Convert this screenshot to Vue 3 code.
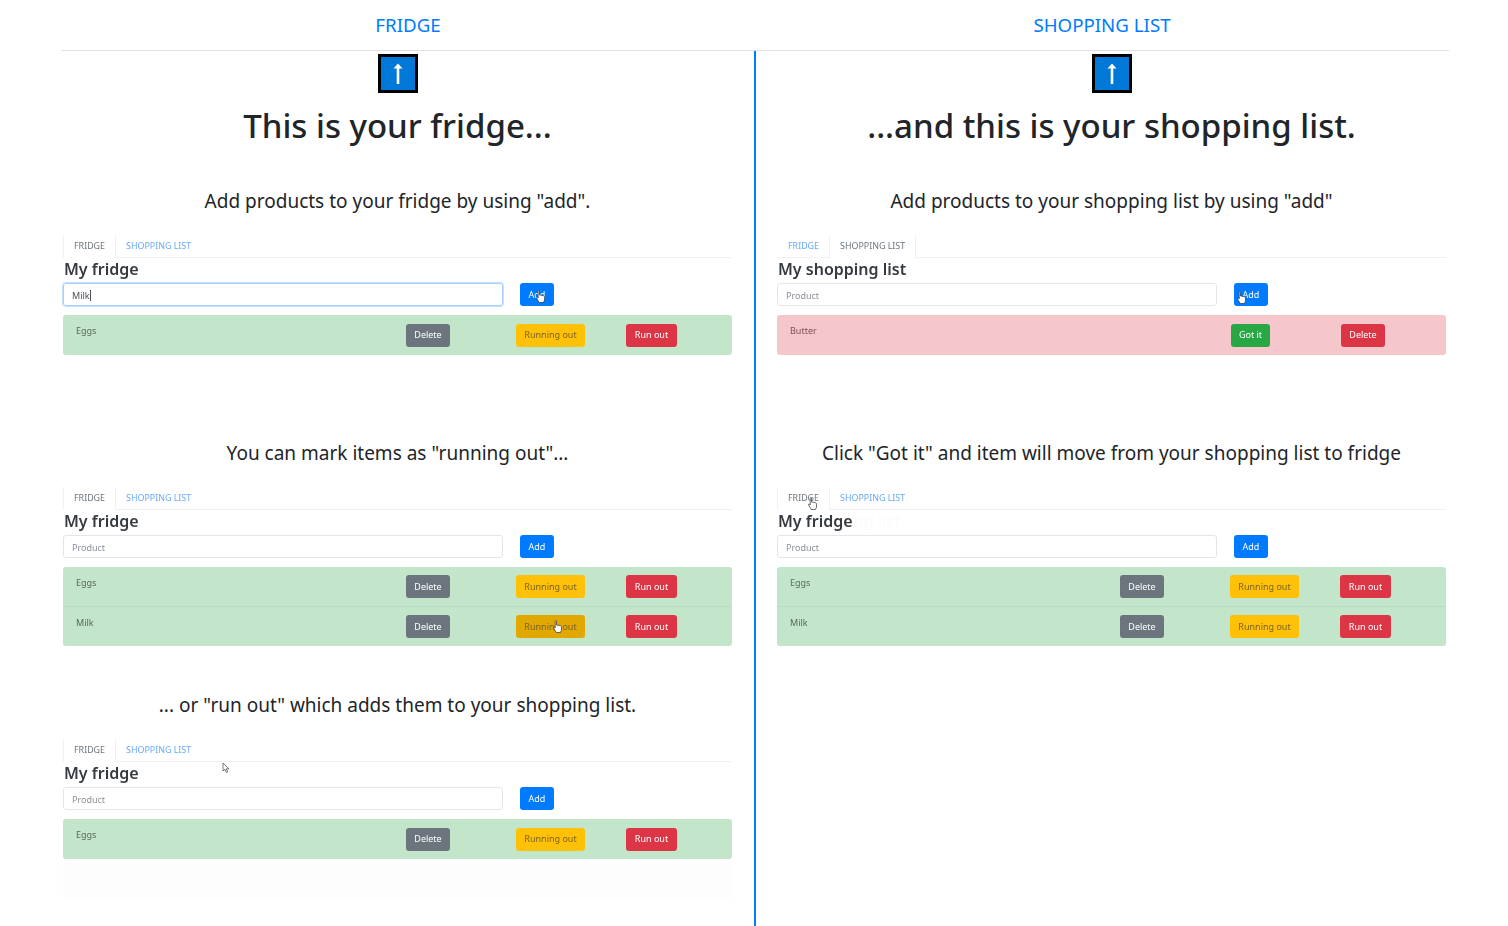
<script setup>
const del = { label: 'Delete', kind: 'grey' }
const low = { label: 'Running out', kind: 'yellow' }
const out = { label: 'Run out', kind: 'red' }
const gotIt = { label: 'Got it', kind: 'green' }

const fridgeActions = [del, low, out]
const shopActions = [gotIt, del]

const columns = [
  {
    nav: 'FRIDGE',
    title: 'This is your fridge...',
    cls: 'col-left',
    sections: [
      {
        text: 'Add products to your fridge by using "add".',
        tab: 'fridge', value: 'Milk', focus: true,
        items: [{ name: 'Eggs', actions: fridgeActions }],
        cursor: { type: 'hand', x: 473, y: 55 }
      },
      {
        text: 'You can mark items as "running out"...',
        tab: 'fridge',
        items: [
          { name: 'Eggs', actions: fridgeActions },
          { name: 'Milk', actions: fridgeActions, pressed: true }
        ],
        cursor: { type: 'hand', x: 490, y: 133 }
      },
      {
        text: '... or "run out" which adds them to your shopping list.',
        tab: 'fridge',
        items: [{ name: 'Eggs', actions: fridgeActions }],
        cursor: { type: 'arrow', x: 159, y: 23 },
        fade: true
      }
    ]
  },
  {
    nav: 'SHOPPING LIST',
    title: '...and this is your shopping list.',
    cls: 'col-right',
    sections: [
      {
        text: 'Add products to your shopping list by using "add"',
        tab: 'shopping',
        items: [{ name: 'Butter', actions: shopActions, red: true }],
        cursor: { type: 'hand', x: 460, y: 56 }
      },
      {
        text: 'Click "Got it" and item will move from your shopping list to fridge',
        tab: 'fridge',
        ghost: true,
        items: [
          { name: 'Eggs', actions: fridgeActions },
          { name: 'Milk', actions: fridgeActions }
        ],
        cursor: { type: 'hand', x: 31, y: 10 }
      }
    ]
  }
]
</script>

<template>
  <div class="page">
    <nav class="top-nav">
      <a v-for="col in columns" :key="col.nav" class="top-link">{{ col.nav }}</a>
    </nav>
    <main class="columns">
      <section v-for="col in columns" :key="col.title" class="col" :class="col.cls">
        <div class="up-btn">
          <svg width="12" height="24" viewBox="0 0 12 24">
            <path d="M6 1.500 L1.500 6.500 H4.700 V22 H7.300 V6.500 H10.500 Z" fill="#fff" />
          </svg>
        </div>
        <h1>{{ col.title }}</h1>
        <div class="steps">
          <article v-for="step in col.sections" :key="step.text" class="step">
            <p class="step-text">{{ step.text }}</p>
            <div class="mock">
              <div class="tabs">
                <span class="tab" :class="{ active: step.tab === 'fridge' }">FRIDGE</span>
                <span class="tab" :class="{ active: step.tab === 'shopping' }">SHOPPING LIST</span>
              </div>
              <h2>{{ step.tab === 'fridge' ? 'My fridge' : 'My shopping list' }}<span v-if="step.ghost" class="ghost">ng list</span></h2>
              <div class="add-form">
                <div class="input" :class="{ focus: step.focus }">
                  <template v-if="step.value">{{ step.value }}<i class="caret"></i></template>
                  <span v-else class="placeholder">Product</span>
                </div>
                <button class="btn blue">Add</button>
              </div>
              <ul class="list">
                <li v-for="item in step.items" :key="item.name" class="row" :class="{ red: item.red }">
                  <span class="name">{{ item.name }}</span>
                  <button
                    v-for="a in item.actions"
                    :key="a.label"
                    class="btn"
                    :class="[a.kind, { pressed: item.pressed && a.kind === 'yellow' }]"
                  >{{ a.label }}</button>
                </li>
              </ul>
              <svg
                v-if="step.cursor.type === 'hand'"
                class="cursor"
                :style="{ left: step.cursor.x + 'px', top: step.cursor.y + 'px' }"
                width="9" height="13" viewBox="0 0 9 13"
              >
                <path d="M2.200 1.200c0-.8 1.300-.8 1.300 0V5l3.600.6c1 .2 1.400.7 1.400 1.500V10l-1 2.500H3.200L.6 8c-.4-.8.5-1.400 1.100-.7l.5.7z" fill="#fff" stroke="#333" stroke-width=".7" />
              </svg>
              <svg
                v-else
                class="cursor"
                :style="{ left: step.cursor.x + 'px', top: step.cursor.y + 'px' }"
                width="8" height="12" viewBox="0 0 8 12"
              >
                <path d="M1 1v8l2-1.800L4.400 10.500l1.300-.6L4.400 6.800H7z" fill="#fff" stroke="#555" stroke-width=".8" />
              </svg>
              <div v-if="step.fade" class="fade"></div>
            </div>
          </article>
        </div>
      </section>
    </main>
  </div>
</template>

<style scoped>
.page {
  height: 926px;
  padding: 0 59px 0 61px;
  box-sizing: border-box;
  overflow: hidden;
  font-family: "Noto Sans", "Open Sans", sans-serif;
  color: #212529;
  background: #fff;
}

.top-nav {
  display: grid;
  grid-template-columns: 694px 694px;
  height: 50px;
  border-bottom: 1px solid #dee2e6;
}

.top-link {
  text-align: center;
  line-height: 50px;
  font-size: 18.700px;
  color: #007bff;
}

.columns {
  display: grid;
  grid-template-columns: 695px 693px;
  height: 875px;
}

.col {
  text-align: center;
}

.col-left {
  padding: 0 22px 0 2px;
  border-right: 2px solid #007bff;
}

.col-right {
  padding: 0 3px 0 21px;
}

.up-btn {
  display: flex;
  align-items: center;
  justify-content: center;
  width: 40px;
  height: 39px;
  margin: 3px auto 0;
  box-sizing: border-box;
  background: #0078d7;
  border: 3px solid #000;
}

h1 {
  margin: 8px 0 0;
  height: 50px;
  line-height: 50px;
  font-size: 33px;
  font-weight: 500;
  white-space: nowrap;
}

.steps {
  margin-top: 35px;
}

.step {
  height: 252px;
}

.step-text {
  margin: 0 0 19px;
  height: 30px;
  line-height: 30px;
  font-size: 19px;
  white-space: nowrap;
}

.mock {
  position: relative;
  text-align: left;
  filter: blur(0.4px);
}

.tabs {
  display: flex;
  height: 22px;
  border-bottom: 1px solid #eef0f2;
}

.tab {
  padding: 0 10px;
  line-height: 22px;
  font-size: 8.900px;
  color: #66a9ff;
  border: 1px solid transparent;
  border-width: 0 1px;
}

.tab + .tab {
  margin-left: -1px;
}

.tab.active {
  color: #6c757d;
  background: #fff;
  border-color: #eef0f2;
  height: 23px;
}

h2 {
  margin: 0 0 2px 1px;
  height: 23px;
  line-height: 23px;
  font-size: 16px;
  font-weight: 600;
  color: #343a40;
}

.ghost {
  margin-left: 1px;
  font-weight: 500;
  color: #fbfbfb;
}

.add-form {
  display: flex;
  gap: 17px;
  margin-bottom: 9px;
}

.input {
  width: 440px;
  height: 23px;
  padding: 0 8px;
  box-sizing: border-box;
  line-height: 23px;
  font-size: 9px;
  color: #495057;
  border: 1px solid #e3e6e9;
  border-radius: 3px;
}

.input.focus {
  border-color: #a9cfff;
  box-shadow: 0 0 0 1px #c4dfff;
}

.placeholder {
  color: #8a9198;
}

.caret {
  display: inline-block;
  width: 1px;
  height: 11px;
  vertical-align: -2px;
  background: #495057;
}

.btn {
  height: 23px;
  padding: 0 8px;
  font: inherit;
  font-size: 9px;
  line-height: 22px;
  color: #fff;
  border: 0;
  border-radius: 3px;
}

.blue { background: #007bff; width: 34px; padding: 0; }
.grey { background: #6c757d; }
.yellow { background: #ffc107; color: #7a6420; }
.red { background: #dc3545; }
.green { background: #28a745; }
.pressed { background: #e0a800; }

.list {
  margin: 0;
  padding: 0;
  list-style: none;
  border-radius: 3px;
  overflow: hidden;
}

.row {
  display: flex;
  align-items: center;
  height: 40px;
  box-sizing: border-box;
  padding-left: 13px;
  background: #c3e6cb;
  border-bottom: 1px solid #b8dcc1;
}

.row:last-child {
  border-bottom: 0;
}

.row + .row {
  height: 39px;
}

.row .btn {
  flex: none;
  margin-right: 0;
}

.row .name {
  flex: none;
  width: 330px;
  margin-top: -9px;
  font-size: 9px;
  color: #5b6a56;
}

.row .grey { width: 44px; margin-right: 66px; padding: 0; }
.row .yellow { width: 69px; margin-right: 41px; padding: 0; }
.row .red { width: 51px; padding: 0; }

/* shopping list row */
.row.red {
  background: #f5c6cb;
  border-color: #f1b5bb;
}

.row.red .name {
  width: 441px;
  color: #7a5458;
}

.row.red .green { width: 39px; margin-right: 71px; padding: 0; }
.row.red .grey { width: 44px; margin-right: 0; padding: 0; background: #dc3545; }

.cursor {
  position: absolute;
}

.fade {
  position: absolute;
  left: 0;
  right: 0;
  top: 120px;
  height: 40px;
  background: #fdfdfd;
}
</style>

<style>
html, body {
  margin: 0;
  background: #fff;
}
</style>
